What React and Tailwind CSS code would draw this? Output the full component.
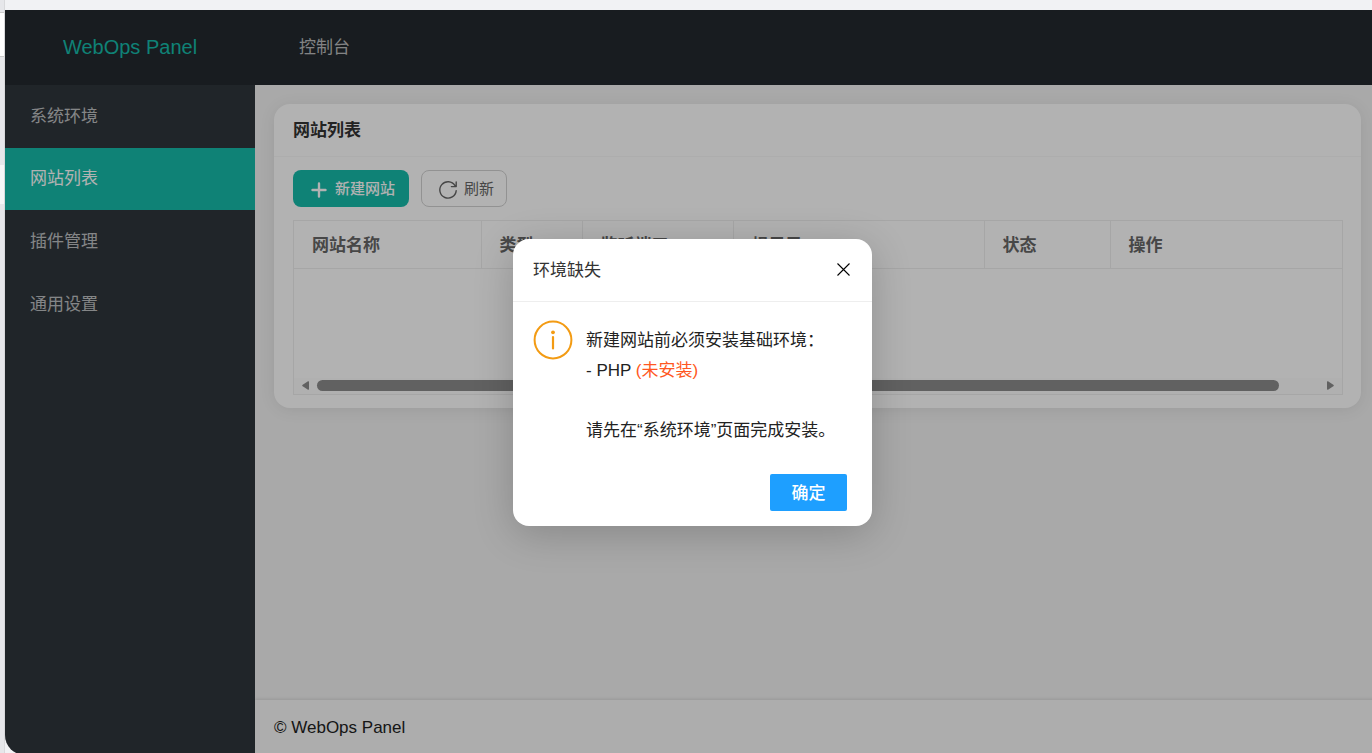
const NAV = ['系统环境', '网站列表', '插件管理', '通用设置'];

const COLUMNS = [
  { label: '网站名称', width: 'w-[187px]' },
  { label: '类型', width: 'w-[101px]' },
  { label: '监听端口', width: 'w-[151px]' },
  { label: '根目录', width: 'w-[251px]' },
  { label: '状态', width: 'w-[126px]' },
  { label: '操作', width: '' },
];

function Header() {
  return (
    <header className="flex h-[75px] shrink-0 items-center bg-[#23292e]">
      <div className="w-[250px] pb-0.5 text-center text-xl text-[#16baaa]">WebOps Panel</div>
      <nav className="px-11">
        <a href="#console" className="text-[17px] text-white/70">控制台</a>
      </nav>
    </header>
  );
}

function Sidebar() {
  return (
    <nav className="w-[250px] shrink-0 bg-[#2f363c]">
      <ul>
        {NAV.map((name) => (
          <li key={name}>
            <a
              href="#page"
              className={
                name === '网站列表'
                  ? 'flex h-[62px] items-center bg-[#16baaa] px-[25px] text-[17px] text-white'
                  : 'flex h-[63px] items-center px-[25px] text-[17px] text-white/70'
              }
            >
              {name}
            </a>
          </li>
        ))}
      </ul>
    </nav>
  );
}

function ScrollTrack() {
  return (
    <div className="flex h-4 items-center bg-[#fcfcfc] px-2">
      <svg className="h-[9px] w-[7px]" viewBox="0 0 7 9" fill="#8b8b8b">
        <path d="M7 1v7q0 1-1 .7L.7 5.3q-1-.8 0-1.6L6 .3Q7 0 7 1z" />
      </svg>
      <div className="mx-2 flex-1">
        <div className="h-[11px] w-[96%] rounded-full bg-[#8b8b8b]" />
      </div>
      <svg className="h-[9px] w-[7px]" viewBox="0 0 7 9" fill="#8b8b8b">
        <path d="M0 1v7q0 1 1 .7l5.3-3.4q1-.8 0-1.6L1 .3Q0 0 0 1z" />
      </svg>
    </div>
  );
}

function SiteCard() {
  return (
    <section className="rounded-2xl bg-white shadow-[0_2px_16px_rgba(0,0,0,0.08)]">
      <h2 className="flex h-[53px] items-center border-b border-[#f8f8f8] px-[19px] pt-0.5 text-[17px] font-bold text-[#333]">
        网站列表
      </h2>
      <div className="py-[13px] pr-[18px] pl-[19px]">
        <div className="flex gap-3">
          <button className="flex h-[37px] w-[116px] items-center justify-center gap-2 rounded-lg bg-[#16baaa] pt-0.5 pl-1 text-[15px] font-medium text-white">
            <svg className="size-4" viewBox="0 0 16 16" stroke="currentColor" strokeWidth="2.4" strokeLinecap="round">
              <path d="M8 1.5v13M1.5 8h13" />
            </svg>
            新建网站
          </button>
          <button className="flex h-[37px] w-[86px] items-center justify-center gap-1.5 rounded-lg border border-[#d2d2d2] pt-0.5 pl-1 text-[15px] text-[#666]">
            <svg className="size-5" viewBox="0 0 20 20" fill="none" stroke="currentColor" strokeWidth="1.4" strokeLinecap="round" strokeLinejoin="round">
              <path d="M18.2 10.6A8.2 8.2 0 1 1 17 5.6M18.2 2v4.6h-4.8" />
            </svg>
            刷新
          </button>
        </div>
        <div className="mt-[13px] border border-[#eee]">
          <table className="w-full table-fixed border-collapse text-left text-[17px] text-[#666]">
            <thead>
              <tr className="h-[47px] border-b border-[#eee]">
                {COLUMNS.map(({ label, width }) => (
                  <th key={label} className={`${width} border-r border-[#eee] px-[18px] pt-0.5 font-bold last:border-r-0`}>
                    {label}
                  </th>
                ))}
              </tr>
            </thead>
          </table>
          <div className="h-[109px]" />
          <ScrollTrack />
        </div>
      </div>
    </section>
  );
}

function Dialog() {
  return (
    <div
      role="dialog"
      aria-labelledby="dialog-title"
      className="w-[359px] rounded-2xl bg-white text-[17px] text-[#222] shadow-[0_8px_40px_rgba(0,0,0,0.2)]"
    >
      <div className="flex h-[63px] items-center justify-between border-b border-[#eee] px-5">
        <h3 id="dialog-title" className="pt-0.5 text-[#333]">环境缺失</h3>
        <button aria-label="关闭" className="pb-0.5 text-black">
          <svg className="mr-0.5 size-[13px]" viewBox="0 0 13 13" stroke="currentColor" strokeWidth="1.1">
            <path d="M.5.5l12 12M12.5.5l-12 12" />
          </svg>
        </button>
      </div>
      <div className="flex gap-[13px] px-5 pt-[19px]">
        <svg className="size-10 shrink-0 overflow-visible" viewBox="0 0 40 40" fill="none" stroke="#f39b13" strokeWidth="2">
          <circle cx="20" cy="19" r="18.4" />
          <path d="M20 16V27.5" strokeWidth="2.2" strokeLinecap="round" />
          <circle cx="20" cy="11.3" r="1.9" fill="#f39b13" stroke="none" />
        </svg>
        <p className="pt-[5px] leading-[30px]">
          新建网站前必须安装基础环境：<br />
          - PHP <span className="text-[#ff5722]">(未安装)</span><br />
          <br />
          请先在“系统环境”页面完成安装。
        </p>
      </div>
      <div className="flex justify-end px-[25px] pt-7 pb-[15px]">
        <button className="h-[37px] w-[77px] rounded-xs bg-[#1e9fff] pt-0.5 font-medium text-white">确定</button>
      </div>
    </div>
  );
}

function EdgeStrip() {
  return (
    <div className="flex w-[5px] shrink-0 flex-col border-r border-[#d8d9db] bg-[#e6e7ea]">
      <div className="h-3" />
      <div className="h-[45px] border-y border-[#ccc] bg-white" />
      <div className="h-[108px]" />
      <div className="h-[39px] bg-[#f6f6f7]" />
    </div>
  );
}

export default function App() {
  return (
    <div className="flex h-screen overflow-hidden bg-[#f1f2f4] font-['Liberation_Sans','Noto_Sans_CJK_SC',sans-serif]">
      <EdgeStrip />
      <div className="relative mt-[10px] -mr-2 -mb-0.5 flex min-w-0 flex-1 flex-col overflow-hidden rounded-bl-[20px]">
        <Header />
        <div className="flex min-h-0 flex-1">
          <Sidebar />
          <div className="flex min-w-0 flex-1 flex-col bg-[#f2f2f2]">
            <main className="flex-1 p-[19px]">
              <SiteCard />
            </main>
            <footer className="flex h-[55px] items-center bg-[#f8f8f8] px-[19px] text-[17px] text-[#222] shadow-[0_-1px_3px_rgba(0,0,0,0.1)]">
              © WebOps Panel
            </footer>
          </div>
        </div>
        <div className="absolute inset-0 flex items-center justify-center bg-black/30">
          <Dialog />
        </div>
      </div>
    </div>
  );
}
